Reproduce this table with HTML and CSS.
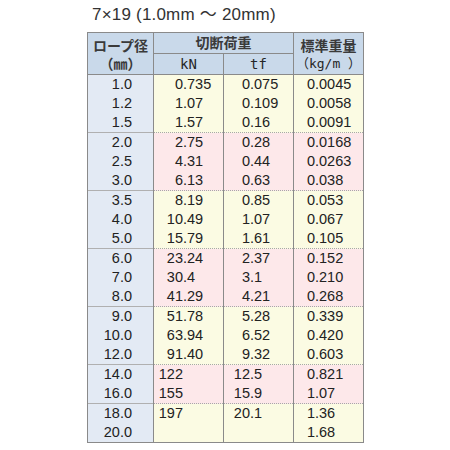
FILE: index.html
```html
<!DOCTYPE html>
<html lang="ja">
<head>
<meta charset="utf-8">
<link rel="stylesheet" href="styles.css">
</head>
<body>
<div class="wrap">
  <div class="title">7×19 (1.0mm ～ 20mm)</div>
  <table class="spec">
    <colgroup><col class="c1"><col class="c2"><col class="c3"><col class="c4"></colgroup>
    <thead>
      <tr class="h1">
        <th rowspan="2" class="hd-side"><span class="ln">ロープ径</span><span class="ln">（㎜）</span></th>
        <th colspan="2">切断荷重</th>
        <th rowspan="2" class="hd-side"><span class="ln">標準重量</span><span class="ln mono">（kg/m ）</span></th>
      </tr>
      <tr class="h2">
        <th class="mono">kN</th>
        <th class="mono">tf</th>
      </tr>
    </thead>
    <tbody>
      <tr class="y">
        <td class="dia"><div>1.0</div><div>1.2</div><div>1.5</div></td>
        <td class="kn"><div><span class="i">0</span>.735</div><div><span class="i">1</span>.07</div><div><span class="i">1</span>.57</div></td>
        <td class="tf"><div><span class="i">0</span>.075</div><div><span class="i">0</span>.109</div><div><span class="i">0</span>.16</div></td>
        <td class="wt"><div><span class="i">0</span>.0045</div><div><span class="i">0</span>.0058</div><div><span class="i">0</span>.0091</div></td>
      </tr>
      <tr class="p">
        <td class="dia"><div>2.0</div><div>2.5</div><div>3.0</div></td>
        <td class="kn"><div><span class="i">2</span>.75</div><div><span class="i">4</span>.31</div><div><span class="i">6</span>.13</div></td>
        <td class="tf"><div><span class="i">0</span>.28</div><div><span class="i">0</span>.44</div><div><span class="i">0</span>.63</div></td>
        <td class="wt"><div><span class="i">0</span>.0168</div><div><span class="i">0</span>.0263</div><div><span class="i">0</span>.038</div></td>
      </tr>
      <tr class="y">
        <td class="dia"><div>3.5</div><div>4.0</div><div>5.0</div></td>
        <td class="kn"><div><span class="i">8</span>.19</div><div><span class="i">10</span>.49</div><div><span class="i">15</span>.79</div></td>
        <td class="tf"><div><span class="i">0</span>.85</div><div><span class="i">1</span>.07</div><div><span class="i">1</span>.61</div></td>
        <td class="wt"><div><span class="i">0</span>.053</div><div><span class="i">0</span>.067</div><div><span class="i">0</span>.105</div></td>
      </tr>
      <tr class="p">
        <td class="dia"><div>6.0</div><div>7.0</div><div>8.0</div></td>
        <td class="kn"><div><span class="i">23</span>.24</div><div><span class="i">30</span>.4</div><div><span class="i">41</span>.29</div></td>
        <td class="tf"><div><span class="i">2</span>.37</div><div><span class="i">3</span>.1</div><div><span class="i">4</span>.21</div></td>
        <td class="wt"><div><span class="i">0</span>.152</div><div><span class="i">0</span>.210</div><div><span class="i">0</span>.268</div></td>
      </tr>
      <tr class="y">
        <td class="dia"><div>9.0</div><div>10.0</div><div>12.0</div></td>
        <td class="kn"><div><span class="i">51</span>.78</div><div><span class="i">63</span>.94</div><div><span class="i">91</span>.40</div></td>
        <td class="tf"><div><span class="i">5</span>.28</div><div><span class="i">6</span>.52</div><div><span class="i">9</span>.32</div></td>
        <td class="wt"><div><span class="i">0</span>.339</div><div><span class="i">0</span>.420</div><div><span class="i">0</span>.603</div></td>
      </tr>
      <tr class="p">
        <td class="dia"><div>14.0</div><div>16.0</div></td>
        <td class="kn"><div><span class="i">122</span></div><div><span class="i">155</span></div></td>
        <td class="tf"><div><span class="i">12</span>.5</div><div><span class="i">15</span>.9</div></td>
        <td class="wt"><div><span class="i">0</span>.821</div><div><span class="i">1</span>.07</div></td>
      </tr>
      <tr class="y">
        <td class="dia"><div>18.0</div><div>20.0</div></td>
        <td class="kn"><div><span class="i">197</span></div><div>&nbsp;</div></td>
        <td class="tf"><div><span class="i">20</span>.1</div><div>&nbsp;</div></td>
        <td class="wt"><div><span class="i">1</span>.36</div><div><span class="i">1</span>.68</div></td>
      </tr>
    </tbody>
  </table>
</div>
</body>
</html>
```

FILE: styles.css
```css
html, body {
  margin: 0;
  padding: 0;
  background: #ffffff;
}
body {
  font-family: "Liberation Sans", "Noto Sans CJK JP", sans-serif;
  color: #222222;
}
.wrap {
  width: 276px;
  margin: 0 auto;
}
.title {
  height: 32px;
  line-height: 30px;
  padding-left: 5px;
  font-size: 17px;
  letter-spacing: 0.2px;
  color: #333333;
  white-space: nowrap;
}
.spec {
  width: 276px;
  table-layout: fixed;
  border-collapse: collapse;
  border: 1px solid #8a8a8a;
}
.c1 { width: 66px; }
.c2, .c3, .c4 { width: 70px; }
.spec th {
  background: #c9d9ea;
  font-family: "Liberation Sans", "Noto Sans CJK JP", sans-serif;
  font-weight: 700;
  font-size: 14px;
  color: #3a3a3a;
  line-height: 18px;
  padding: 0;
  border: 1px solid #8a8a8a;
  text-align: center;
  vertical-align: middle;
  overflow: hidden;
}
.spec .h1 th { height: 20px; }
.spec .h2 th { height: 19px; }
.spec th.hd-side { padding-top: 2px; }
.spec .ln {
  display: block;
  height: 18px;
  line-height: 18px;
}
.spec .mono {
  font-family: "DejaVu Sans Mono", "Noto Sans CJK JP", monospace;
  font-weight: 400;
  font-size: 13.5px;
  color: #262626;
}
.spec .ln.mono { font-size: 13px; }
.spec .h2 th.mono { line-height: 19px; padding-top: 1px; font-size: 14px; }
.spec td {
  padding: 0;
  vertical-align: top;
  font-size: 14.5px;
  line-height: 19px;
  white-space: nowrap;
  border-left: 1px solid #8a8a8a;
  border-right: 1px solid #8a8a8a;
  border-top: 1px dotted #a8a8a8;
}
.spec td div { height: 19px; }
.spec td.dia {
  background: #e3eaf4;
  text-align: right;
  padding-right: 21px;
  border-top: 1px solid #b0b0b0;
}
.y td.kn, .y td.tf, .y td.wt { background: #fbfbe3; }
.p td.kn, .p td.tf, .p td.wt { background: #fde8ea; }
.i {
  display: inline-block;
  text-align: right;
}
.kn .i { width: 29px; }
.tf .i { width: 26px; }
.wt .i { width: 21px; }
```
